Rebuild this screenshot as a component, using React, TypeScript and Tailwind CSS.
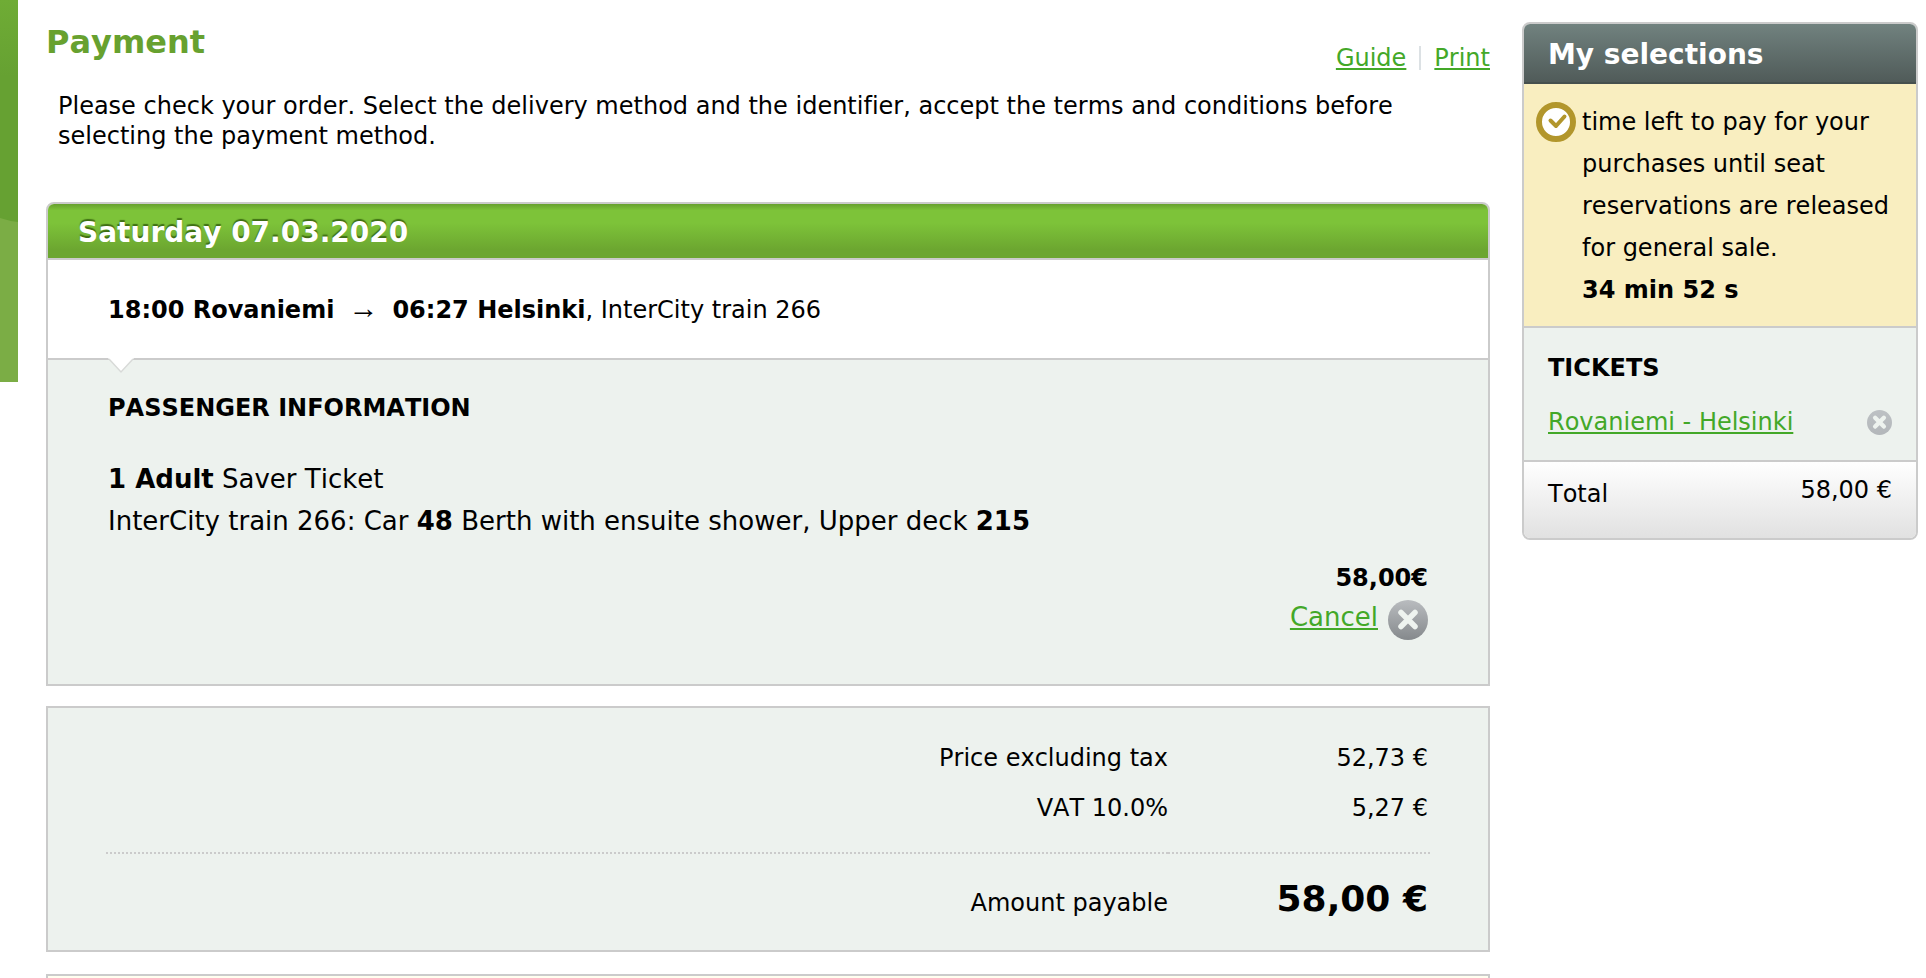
const linkClass = "text-[#43a828] underline decoration-2 underline-offset-2";

function CloseIcon({ className, muted = false }: { className: string; muted?: boolean }) {
  const gradientId = muted ? "close-muted" : "close-strong";
  return (
    <svg viewBox="0 0 40 40" className={className} aria-hidden="true">
      <defs>
        <linearGradient id={gradientId} x1="0" y1="0" x2="0" y2="1">
          <stop offset="0" stopColor={muted ? "#bdc1c4" : "#b9bcbf"} />
          <stop offset="1" stopColor={muted ? "#b3b7ba" : "#85898c"} />
        </linearGradient>
      </defs>
      <circle cx="20" cy="20" r="20" fill={`url(#${gradientId})`} />
      <path
        d="M13 12.5 27 26.5M27 12.5 13 26.5"
        stroke="#eef3ef"
        strokeWidth={muted ? 7 : 5.5}
        strokeLinecap="round"
        fill="none"
      />
    </svg>
  );
}

function CheckBadge() {
  return (
    <svg viewBox="0 0 40 40" className="mt-px h-10 w-10 shrink-0" aria-hidden="true">
      <circle cx="20" cy="20" r="17" fill="#fff" stroke="#b2962c" strokeWidth="6" />
      <path
        d="M14.5 18.5 20 24 28.5 14.5"
        fill="none"
        stroke="#b2962c"
        strokeWidth="4"
        strokeLinecap="round"
        strokeLinejoin="round"
      />
    </svg>
  );
}

function EdgeDecoration() {
  return (
    <svg viewBox="0 0 18 382" className="h-[382px] w-[18px] shrink-0" aria-hidden="true">
      <defs>
        <linearGradient id="edge" x1="0" y1="0" x2="0" y2="1">
          <stop offset="0" stopColor="#6fac35" />
          <stop offset="0.2" stopColor="#66a132" />
          <stop offset="1" stopColor="#66a132" />
        </linearGradient>
      </defs>
      <rect width="18" height="382" fill="url(#edge)" />
      <path d="M0 218Q9 221 18 222V382H0Z" fill="#7bad45" />
    </svg>
  );
}

function Journey() {
  return (
    <section className="mt-[51px] overflow-hidden rounded-t-lg border-2 border-[#cbcbcb]">
      <h2 className="border-b-2 border-[#cbcbcb] bg-[linear-gradient(#67a02e,#7dc339_12%,#7dc339_35%,#6ca630_85%,#6ca630)] pt-1 pl-[30px] text-[28px] leading-[50px] font-bold text-white [text-shadow:0_-2px_1px_#3f6f14]">
        Saturday 07.03.2020
      </h2>
      <p className="pt-0.5 pl-[60px] leading-[96px]">
        <b>18:00 Rovaniemi</b>
        <span className="px-3.5 font-[Liberation_Serif] text-[30px] leading-none">→</span>
        <b>06:27 Helsinki</b>, InterCity train 266
      </p>
      <div className="relative border-t-2 border-[#cbcbcb] bg-[#edf2ee] px-[60px] pt-[33px] pb-11">
        <svg viewBox="0 0 26 16" className="absolute -top-0.5 left-[60px] h-4 w-[26px]" aria-hidden="true">
          <path d="M0 0H26L13 14Z" fill="#fff" />
          <path d="M1 1 13 14 25 1" fill="none" stroke="#d8dad8" strokeWidth="1.5" />
        </svg>
        <h3 className="font-bold">PASSENGER INFORMATION</h3>
        <p className="mt-[35px] text-[26px] leading-[42px]">
          <b>1 Adult</b> Saver Ticket
          <br />
          InterCity train 266: Car <b>48</b> Berth with ensuite shower, Upper deck <b>215</b>
        </p>
        <p className="mt-[21px] text-right font-bold">58,00€</p>
        <div className="mt-[7px] flex justify-end gap-2.5">
          <a href="#cancel" className={`text-[26px] leading-[34px] ${linkClass}`}>
            Cancel
          </a>
          <button type="button" aria-label="Cancel journey">
            <CloseIcon className="h-10 w-10" />
          </button>
        </div>
      </div>
    </section>
  );
}

function PriceSummary() {
  return (
    <section className="mt-5 border-2 border-[#cbcbcb] bg-[#edf2ee] px-[58px] pt-[25px] pb-[22px]">
      <table className="w-full border-collapse text-right leading-[50px]">
        <tbody>
          <tr>
            <th scope="row" className="p-0 text-right font-normal">Price excluding tax</th>
            <td className="w-[262px] p-0 pr-0.5">52,73 €</td>
          </tr>
          <tr>
            <th scope="row" className="p-0 pb-[19px] text-right font-normal">VAT 10.0%</th>
            <td className="p-0 pr-0.5 pb-[19px]">5,27 €</td>
          </tr>
        </tbody>
        <tfoot>
          <tr className="border-t-2 border-dotted border-[#cbcbcb] align-baseline">
            <th scope="row" className="p-0 pt-5 text-right font-normal">Amount payable</th>
            <td className="p-0 pt-5 pr-0.5 text-4xl leading-[50px] font-bold">58,00 €</td>
          </tr>
        </tfoot>
      </table>
    </section>
  );
}

function Selections() {
  return (
    <aside className="mt-[22px] mr-2 ml-8 w-[396px] shrink-0 overflow-hidden rounded-lg border-2 border-[#cbcbcb]">
      <h2 className="border-b-2 border-[#46504e] bg-linear-to-b from-[#71827f] to-[#505b59] pt-1 pl-6 text-[28px] leading-[54px] font-bold text-white">
        My selections
      </h2>
      <div className="flex gap-1.5 bg-[#f9eec0] pt-[17px] pr-5 pb-[15px] pl-3 leading-[42px]">
        <CheckBadge />
        <p>
          time left to pay for your purchases until seat reservations are released for general sale.
          <strong className="block">34 min 52 s</strong>
        </p>
      </div>
      <div className="border-y-2 border-[#cbcbcb] bg-[#edf2ee] px-6 pt-[25px] pb-[23px]">
        <h3 className="font-bold">TICKETS</h3>
        <div className="mt-6 flex items-center justify-between">
          <a href="#ticket" className={linkClass}>
            Rovaniemi - Helsinki
          </a>
          <button type="button" aria-label="Remove ticket">
            <CloseIcon className="h-[25px] w-[25px]" muted />
          </button>
        </div>
      </div>
      <dl className="flex justify-between bg-linear-to-b from-white to-[#e1e1e1] px-6 pt-[13px] pb-[29px]">
        <dt className="pt-1">Total</dt>
        <dd>58,00 €</dd>
      </dl>
    </aside>
  );
}

export default function App() {
  return (
    <div className="flex items-start bg-white font-['DejaVu_Sans',Verdana,sans-serif] text-2xl leading-[30px] text-black [font-kerning:none] [font-variant-ligatures:none]">
      <EdgeDecoration />
      <main className="ml-7 min-w-0 flex-1">
        <header className="flex justify-between">
          <h1 className="pt-[22px] text-[32px] leading-10 font-bold text-[#67a12f]">Payment</h1>
          <nav className="flex pt-[43px]">
            <a href="#guide" className={linkClass}>Guide</a>
            <span className="mx-[13px] my-[3px] w-0.5 bg-[#dce1e4]" />
            <a href="#print" className={linkClass}>Print</a>
          </nav>
        </header>
        <p className="mt-[18px] mr-20 ml-3">
          Please check your order. Select the delivery method and the identifier, accept the terms and conditions before
          selecting the payment method.
        </p>
        <Journey />
        <PriceSummary />
        <section className="mt-[22px] h-1 border-2 border-b-0 border-[#cbcbcb] bg-[#fffff0]" />
      </main>
      <Selections />
    </div>
  );
}
